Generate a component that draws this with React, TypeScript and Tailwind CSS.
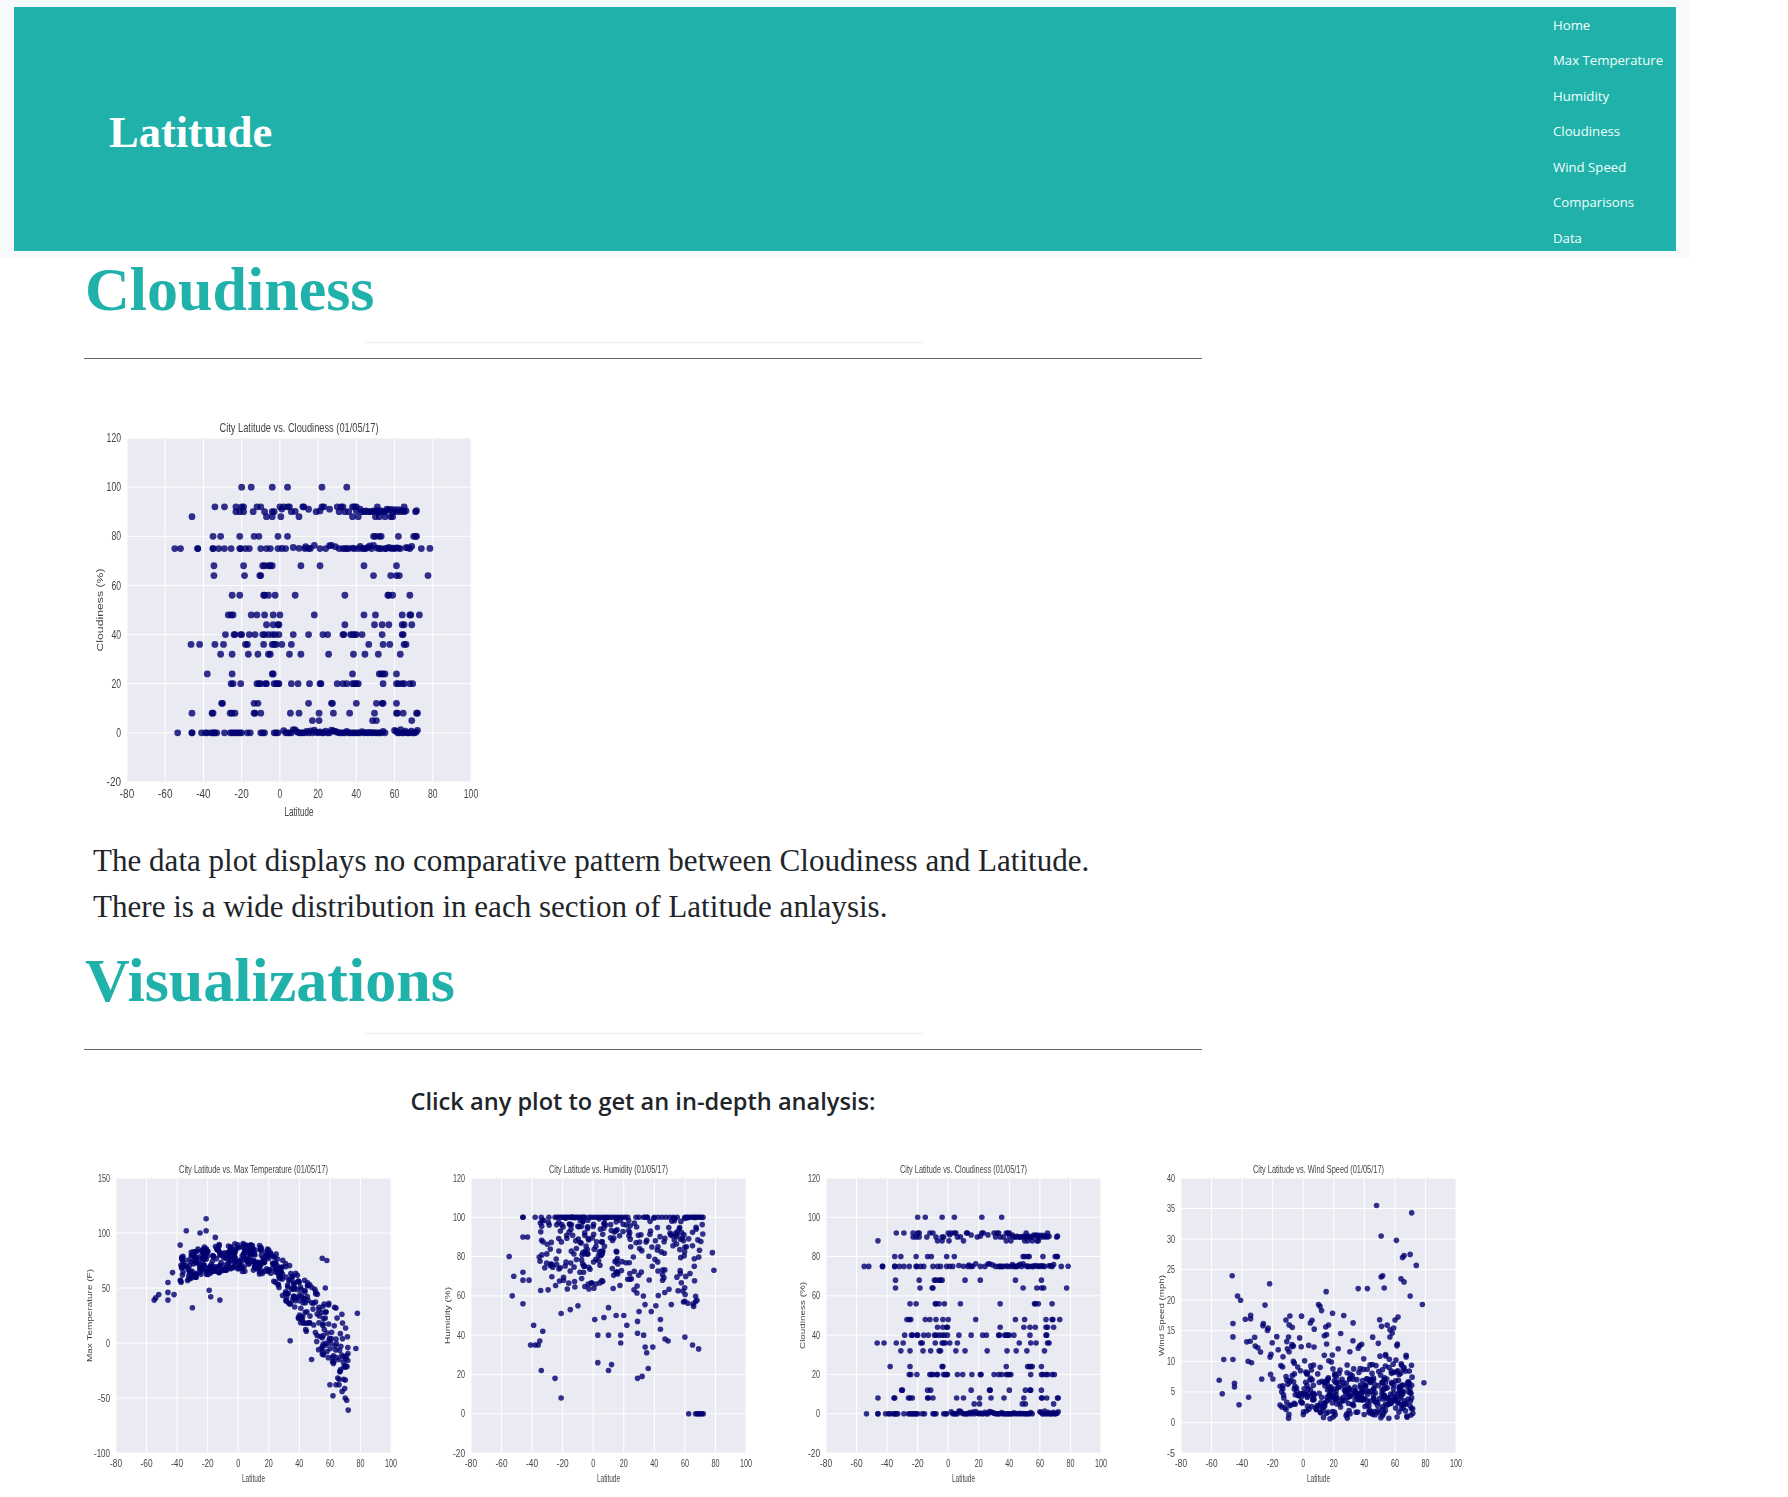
import React from 'react';

// ─── Types ────────────────────────────────────────────────────────────────────

type Point = [number, number];

interface PlotProps {
  width: number;
  height: number;
  left: number;
  top: number;
  size: number;
  r: number;
  xDomain: [number, number];
  xTicks: number[];
  yDomain: [number, number];
  yTicks: number[];
  title: string;
  titleWidth: number;
  titleY: number;
  yLabel: string;
  yLabelWidth: number;
  yLabelX: number;
  xLabelWidth: number;
  tickSize: number;
  labelSize: number;
  points: Point[];
}

// ─── Data ─────────────────────────────────────────────────────────────────────

const seeded = (seed: number) => () => {
  seed = (seed + 0x6d2b79f5) | 0;
  let t = Math.imul(seed ^ (seed >>> 15), 1 | seed);
  t = (t + Math.imul(t ^ (t >>> 7), 61 | t)) ^ t;
  return ((t ^ (t >>> 14)) >>> 0) / 4294967296;
};

const range = (from: number, to: number, step: number) => {
  const out: number[] = [];
  for (let v = from; v <= to; v += step) out.push(v);
  return out;
};

const CLOUD_ROWS: [number, number[]][] = [
  [100, [-20, -15, -4, 4, 22, 35]],
  [92, [-34, -29, -23, -20, -19, -12, -10, 0, 2, 4, 5, 12, 12.5, 22, 23, 30, 32, 33, 38, 39, 40, 51, 65]],
  [90, [-23, -21, -19, -14, -8, -4, -3, 1, 6, 8, 15, 19, 21, 26, 31, 34, 36, 40, ...range(42, 66, 1), 71, 71.5]],
  [88, [-46, -7, -4, 0.5, 10, 38, 41, 50, 52, 55, 58, 59]],
  [80, [-35, -31, -21, -13.5, -11, -1, 4, 49, 50, 52, 53, 62, 70, 71, 71.5]],
  [75, [-55, -52, -43, -43, -35, -35, -32, -29, -25.5, -21, -20.5, -18, -16, -10, -7, -5, -1, 1, 3, 7, 10, 13, 13.5, 15, 16, 18, 21, 24, 26, 27, 29, 31, 33, 34, 35, 36, 38, 39, 41, 42, 43, 44, 45, 46, 47, 48, 49, 51, 52, 53, 55, 55.5, 57, 58, 59, 60, 61, 62, 63, 66, 67, 68, 69, 74, 78.5]],
  [68, [-34.5, -19, -9, -8, -6, -5, -4, 11, 21, 44, 61]],
  [64, [-34.5, -18.5, -10.5, -10, 49, 58, 61, 62.5, 77.5]],
  [56, [-25, -21, -8.5, -8, -6, -2.5, 8, 34, 56.5, 57, 59, 68]],
  [48, [-27, -25.5, -24.5, -15, -12, -8, -3.5, 0, 18, 44, 50, 64, 68, 68.5, 73]],
  [44, [-7, -3.5, -1, -0.5, 34, 49.5, 53.5, 57, 64, 65, 69]],
  [40, [-28.5, -24, -23.5, -20.5, -20, -16, -13, -9, -8, -6, -4, -2.5, -0.5, 7, 15, 22.5, 25, 33, 33.5, 37, 38, 39, 40, 43, 53.5, 64, 64.5]],
  [36, [-46.5, -42, -34, -29.5, -18, -17, -8.5, -4, -3, -2, 1, 6, 46.5, 54, 57.5, 65, 66]],
  [32, [-31, -25, -16.5, -11.5, -6, -5, 5, 11, 25.5, 38.5, 44.5, 51.5, 63]],
  [24, [-38, -25, -4, -3.5, 38, 52, 53, 54, 55, 61]],
  [20, [-25.5, -24.5, -20.5, -12, -11, -10, -7.5, -7, -3, -2, -1, -0.5, 6, 9.5, 15.5, 21, 21.5, 30, 33, 35, 38, 39, 40, 41, 54, 61, 62, 64, 65, 68, 69.5]],
  [12, [-30.5, -30, -13.5, -11.5, 15, 27, 27.5, 40, 50.5, 53.5, 54, 61]],
  [8, [-46, -35.5, -35, -26, -25, -23.5, -13.5, -13, -10, 5.5, 10, 20.5, 28, 36.5, 49.5, 61, 61.5, 64.5, 71.5, 72]],
  [5, [17, 20.5, 48.5, 50.5, 69]],
  [0, [-53.5, -46, -46, -41, -39, -38, -36, -35, -34.5, -34, -33, -29, -26, -25, -24, -23, -22, -21, -20, -17, -15.5, -10, -9, -8, -3, -2, -1, ...range(2, 55, 1), ...range(60, 72, 0.8)]],
];

// the dense rows wobble a little in the reference, values are not all exact
const cloudPoints: Point[] = (() => {
  const rand = seeded(5);
  return CLOUD_ROWS.flatMap(([y, xs]) =>
    xs.map((x): Point => {
      const dense = (y === 90 || y === 75 || y === 0) && x > 0;
      return [x, dense && rand() > 0.55 ? y + rand() * 1.4 : y];
    }),
  );
})();

const tempPoints: Point[] = (() => {
  const rand = seeded(11);
  const out: Point[] = [
    [-21, 113], [-34, 102], [-25, 100], [-21, 102], [-15, 96], [-38, 89], [-30, 32], [-12, 39], [-19, 48], [-18, 42],
    [55, 77], [58, 75], [72, -61], [78, 27], [77, -5], [34, 2], [48, -15], [-55, 39], [-54, 41], [-52, 44], [-46, 55], [-46, 46], [-46, 39], [-43, 64], [-42, 44],
    [70, -50], [71, -52], [62, -48], [64, -38], [66, -38], [68, -44], [60, -38], [69, -33], [70, -22], [57, 50],
  ];
  for (let i = 0; i < 500; i++) {
    const x = -38 + rand() * 110;
    const curve = x < 18 ? 78 - Math.pow(Math.abs(x + 2) / 36, 2) * 12 : 78 - ((x - 18) / 55) * 92;
    const spread = x < 18 ? 13 : 12 + (x - 18) * 0.42;
    out.push([x, curve + (rand() - 0.5) * 2 * spread]);
  }
  return out;
})();

const humidityPoints: Point[] = (() => {
  const rand = seeded(27);
  const out: Point[] = [
    [-55, 80], [-53, 60], [-52, 70], [-46, 90], [-46, 72], [-46, 68], [-46, 56], [-43, 90], [-42, 68], [-39, 45], [-41, 35], [-38, 35], [-36, 35], [-35, 37], [-33, 42],
    [-34, 22], [-25, 18], [-21, 8], [-21, 51], [-10, 55], [-15, 53], [1, 48], [3, 40], [3, 26], [10, 22], [12, 25], [10, 40], [18, 36], [18, 40], [10, 54], [7, 49],
    [29, 18], [32, 19], [36, 23], [35, 31], [34, 34], [33, 40], [29, 41], [39, 34], [47, 38], [49, 37], [60, 39], [65, 35], [69, 33], [78, 82], [79, 73],
    [62.5, 0], [67, 0], [68, 0], [69, 0], [70, 0], [71, 0], [72, 0],
    [20, 50], [22, 45], [29, 47], [30, 52], [44, 43], [44, 48], [38, 52], [41, 55], [15, 50],
  ];
  [-46, -46, -38, -34, -29, ...range(-25, -5, 1.2), ...range(-3, 24, 1.6), 28, 30, 33, 34, 35, ...range(40, 56, 2.5), ...range(60, 72, 1.2)].forEach(x => out.push([x, 100]));
  for (let i = 0; i < 300; i++) {
    const x = -36 + rand() * 108;
    out.push([x, 100 - Math.pow(rand(), 1.2) * (x > 18 ? 46 : 38)]);
  }
  return out;
})();

const windPoints: Point[] = (() => {
  const rand = seeded(41);
  const out: Point[] = [
    [48, 35.5], [71, 34.3], [51, 30.5], [61, 29.8], [70, 27.5], [65, 27], [66, 27.3], [74, 25.7], [-46.5, 24], [-22, 22.7], [-43, 20.7], [-41, 20], [15, 21.4],
    [36, 21.9], [42, 21.9], [52, 24], [51, 23.8], [53, 22], [64, 23.5], [66, 23], [70, 20.7], [78, 19.3], [79, 6.5], [-55, 6.9], [-53, 4.7], [-52, 10.3], [-46, 16.2], [-46, 14], [-46, 10.3], [-45, 6.4], [-45, 5.8], [-42, 2.9],
    [10, 19.3], [11, 19], [12, 18.3], [-25, 19.2],
  ];
  for (let i = 0; i < 130; i++) out.push([-38 + rand() * 108, 4 + rand() * 14]);
  // bulk of the cloud sits around 2-6 mph and thins out upward
  for (let i = 0; i < 340; i++) {
    const x = -16 + Math.pow(rand(), 0.8) * 88;
    out.push([x, 0.6 + Math.pow((rand() + rand()) / 2, 1.4) * 10]);
  }
  return out;
})();

// ─── Plot ─────────────────────────────────────────────────────────────────────

const Plot: React.FC<PlotProps> = ({
  width, height, left, top, size, r, xDomain, xTicks, yDomain, yTicks,
  title, titleWidth, titleY, yLabel, yLabelWidth, yLabelX, xLabelWidth, tickSize, labelSize, points,
}) => {
  const px = (x: number) => left + ((x - xDomain[0]) / (xDomain[1] - xDomain[0])) * size;
  const py = (y: number) => top + size - ((y - yDomain[0]) / (yDomain[1] - yDomain[0])) * size;
  const center = left + size / 2;
  const tickWidth = (label: string) => label.length * tickSize * 0.4;

  return (
    <svg width={width} height={height} className="block shrink-0 blur-[0.55px] font-['Liberation_Sans',sans-serif]">
      <rect x={left} y={top} width={size} height={size} fill="#eaeaf2" />
      {xTicks.map(t => <line key={t} x1={px(t)} x2={px(t)} y1={top} y2={top + size} stroke="#fff" strokeWidth="1" />)}
      {yTicks.map(t => <line key={t} x1={left} x2={left + size} y1={py(t)} y2={py(t)} stroke="#fff" strokeWidth="1" />)}
      {points.map(([x, y], i) => <circle key={i} cx={px(x)} cy={py(y)} r={r} fill="#000070" fillOpacity="0.8" />)}
      <g fill="#444">
        <text x={center} y={titleY} textAnchor="middle" fontSize={labelSize} textLength={titleWidth} lengthAdjust="spacingAndGlyphs">{title}</text>
        {xTicks.map(t => (
          <text key={t} x={px(t)} y={top + size + tickSize * 1.35} textAnchor="middle" fontSize={tickSize} textLength={tickWidth(String(t))} lengthAdjust="spacingAndGlyphs">{t}</text>
        ))}
        {yTicks.map(t => (
          <text key={t} x={left - 6} y={py(t) + tickSize * 0.35} textAnchor="end" fontSize={tickSize} textLength={tickWidth(String(t))} lengthAdjust="spacingAndGlyphs">{t}</text>
        ))}
        <text x={center} y={top + size + tickSize * 2.85} textAnchor="middle" fontSize={labelSize} textLength={xLabelWidth} lengthAdjust="spacingAndGlyphs">Latitude</text>
        <text
          transform={`translate(${yLabelX} ${top + size / 2}) rotate(-90)`}
          textAnchor="middle"
          fontSize={labelSize * 0.7}
          textLength={yLabelWidth}
          lengthAdjust="spacingAndGlyphs"
        >
          {yLabel}
        </text>
      </g>
    </svg>
  );
};

const SMALL = { width: 355, height: 347, left: 32, top: 29, size: 275, r: 2.8, titleY: 24, xLabelWidth: 23, tickSize: 10, labelSize: 10.5 };
const X_TICKS = range(-80, 100, 20);

// ─── Page ─────────────────────────────────────────────────────────────────────

const NAV = ['Home', 'Max Temperature', 'Humidity', 'Cloudiness', 'Wind Speed', 'Comparisons', 'Data'];

const Heading: React.FC<{ children: React.ReactNode }> = ({ children }) => (
  <div>
    <h1 className="h-[64px] pl-[1px] text-[62px] leading-[62px] font-bold text-[#20b2aa] font-['Liberation_Serif',serif]">{children}</h1>
    <div className="mt-[20px] ml-[281px] w-[558px] border-t border-[#eeeeee]" />
    <div className="mt-[15px] border-t border-[#666666]" />
  </div>
);

export default function App() {
  return (
    <div className="w-[1788px] h-[1497px] overflow-hidden bg-white">
      {/* Header */}
      <div className="w-[1690px] h-[258px] bg-[#f8f9fa] pt-[7px] pl-[14px]">
        <div className="w-[1662px] h-[244px] bg-[#20b2aa] flex items-center justify-between overflow-hidden">
          <div className="ml-[95px] mt-[6px] text-[44.5px] font-bold text-white font-['Liberation_Serif',serif]">Latitude</div>
          <nav className="w-[123px] self-start mt-[1px] flex flex-col">
            {NAV.map(item => (
              <a key={item} className="h-[35.5px] shrink-0 flex items-center whitespace-nowrap text-[13.2px] text-[#f2fffd] font-['Open_Sans',sans-serif]">
                {item}
              </a>
            ))}
          </nav>
        </div>
      </div>

      <div className="w-[1118px] ml-[84px]">
        {/* Cloudiness */}
        <Heading>Cloudiness</Heading>
        <div className="mt-[56px]">
          <Plot
            width={420}
            height={423}
            left={43}
            top={23}
            size={344}
            r={3.4}
            xDomain={[-80, 100]}
            xTicks={X_TICKS}
            yDomain={[-20, 120]}
            yTicks={range(-20, 120, 20)}
            title="City Latitude vs. Cloudiness (01/05/17)"
            titleWidth={159}
            titleY={17}
            yLabel="Cloudiness (%)"
            yLabelWidth={83}
            yLabelX={19}
            xLabelWidth={29}
            tickSize={12}
            labelSize={13}
            points={cloudPoints}
          />
        </div>
        <div className="pl-[9px] text-[31.07px] leading-[46px] text-[#212529] font-['Liberation_Serif',serif]">
          <p className="whitespace-nowrap">The data plot displays no comparative pattern between Cloudiness and Latitude.</p>
          <p className="whitespace-nowrap">There is a wide distribution in each section of Latitude anlaysis.</p>
        </div>

        {/* Visualizations */}
        <div className="mt-[19px]">
          <Heading>Visualizations</Heading>
        </div>
        <p className="mt-[33px] text-center text-[23.6px] leading-[36px] font-semibold text-[#212529] font-['Open_Sans',sans-serif]">
          Click any plot to get an in-depth analysis:
        </p>
        <div className="mt-[30px] flex w-[1420px]">
          <Plot {...SMALL} yLabelX={8} xDomain={[-80, 100]} xTicks={X_TICKS} yDomain={[-100, 150]} yTicks={range(-100, 150, 50)} title="City Latitude vs. Max Temperature (01/05/17)" titleWidth={149} yLabel="Max Temperature (F)" yLabelWidth={93} points={tempPoints} />
          <Plot {...SMALL} yLabelX={11} xDomain={[-80, 100]} xTicks={X_TICKS} yDomain={[-20, 120]} yTicks={range(-20, 120, 20)} title="City Latitude vs. Humidity (01/05/17)" titleWidth={119} yLabel="Humidity (%)" yLabelWidth={57} points={humidityPoints} />
          <Plot {...SMALL} yLabelX={11} xDomain={[-80, 100]} xTicks={X_TICKS} yDomain={[-20, 120]} yTicks={range(-20, 120, 20)} title="City Latitude vs. Cloudiness (01/05/17)" titleWidth={127} yLabel="Cloudiness (%)" yLabelWidth={67} points={cloudPoints} />
          <Plot {...SMALL} yLabelX={15} xDomain={[-80, 100]} xTicks={X_TICKS} yDomain={[-5, 40]} yTicks={range(-5, 40, 5)} title="City Latitude vs. Wind Speed (01/05/17)" titleWidth={131} yLabel="Wind Speed (mph)" yLabelWidth={81} points={windPoints} />
        </div>
      </div>
    </div>
  );
}
